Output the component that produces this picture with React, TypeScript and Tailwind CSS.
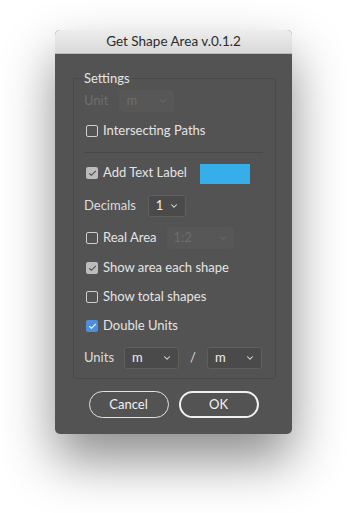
import { Check, ChevronDown } from "lucide-react";

type Tone = "off" | "gray" | "blue";

function Box({ tone }: { tone: Tone }) {
  if (tone === "off") {
    return (
      <span className="w-[12px] h-[12px] rounded-[2px] border border-[#cfcfcf] shrink-0" />
    );
  }
  const bg = tone === "blue" ? "bg-[#4d8fdc]" : "bg-[#bcbcbc]";
  const mark = tone === "blue" ? "text-[#e8f1fb]" : "text-[#5a5a5a]";
  return (
    <span
      className={`w-[12px] h-[12px] rounded-[2px] ${bg} shrink-0 flex items-center justify-center`}
    >
      <Check className={`w-[9px] h-[9px] ${mark}`} strokeWidth={3} />
    </span>
  );
}

function CheckRow({ tone, label }: { tone: Tone; label: string }) {
  return (
    <label className="flex items-center gap-[5px] h-[20px] pl-[2px]">
      <Box tone={tone} />
      <span className="text-[#e4e4e4]">{label}</span>
    </label>
  );
}

function Select({
  value,
  width,
  dim = false,
}: {
  value: string;
  width: string;
  dim?: boolean;
}) {
  return (
    <div
      className={`${width} h-[22px] rounded-[3px] flex items-center justify-between pl-[7px] pr-[6px] ${
        dim
          ? "bg-[#575757] text-[#6d6d6d]"
          : "bg-[#4a4a4a] border border-[#5f5f5f] text-[#ededed]"
      }`}
    >
      <span>{value}</span>
      <ChevronDown
        className={`w-[10px] h-[10px] ${dim ? "text-[#686868]" : "text-[#e6e6e6]"}`}
        strokeWidth={2.5}
      />
    </div>
  );
}

export default function App() {
  return (
    <div
      className="min-h-[513px] bg-white pt-[30px]"
      style={{ fontFamily: "Lato, 'Noto Sans', sans-serif" }}
    >
      <div className="mx-auto w-[237px] rounded-[5px] bg-[#535353] shadow-[0_26px_52px_rgba(0,0,0,0.45)] overflow-hidden">
        {/* Title bar */}
        <div className="h-[24px] bg-gradient-to-b from-[#ededed] to-[#d9d9d9] border-b border-[#b9b9b9] flex items-center justify-center text-[13.5px] text-[#2c2c2c]">
          Get Shape Area v.0.1.2
        </div>

        <div className="pt-[17px] pb-[16px] text-[13px]">
          <fieldset className="ml-[18px] mr-[16px] border border-[#4a4a4a] rounded-[3px] pl-[10px] pr-[12px] pb-[9px]">
            <legend className="leading-[14px] px-[2px] -ml-[2px] text-[#e4e4e4]">
              Settings
            </legend>

            <div className="flex flex-col">
              {/* Unit */}
              <div className="flex items-center gap-[11px] mt-[6px] h-[20px]">
                <span className="text-[#6e6e6e]">Unit</span>
                <Select value="m" width="w-[55px]" dim />
              </div>

              <div className="mt-[10px]">
                <CheckRow tone="off" label="Intersecting Paths" />
              </div>

              <div className="mt-[11px] h-[1px] bg-[#474747]" />

              <div className="mt-[9px] flex items-center h-[22px]">
                <CheckRow tone="gray" label="Add Text Label" />
                <span className="ml-[13px] w-[50px] h-[20px] bg-[#36aeea] mt-[2px]" />
              </div>

              <div className="mt-[11px] flex items-center gap-[12px] h-[22px]">
                <span className="text-[#dcdcdc]">Decimals</span>
                <Select value="1" width="w-[38px]" />
              </div>

              <div className="mt-[10px] flex items-center h-[22px]">
                <CheckRow tone="off" label="Real Area" />
                <div className="ml-[10px]">
                  <Select value="1:2" width="w-[67px]" dim />
                </div>
              </div>

              <div className="mt-[9px]">
                <CheckRow tone="gray" label="Show area each shape" />
              </div>
              <div className="mt-[9px]">
                <CheckRow tone="off" label="Show total shapes" />
              </div>
              <div className="mt-[9px]">
                <CheckRow tone="blue" label="Double Units" />
              </div>

              <div className="mt-[11px] flex items-center h-[22px]">
                <span className="text-[#dcdcdc] w-[40px]">Units</span>
                <Select value="m" width="w-[55px]" />
                <span className="text-[#dcdcdc] w-[28px] text-center">/</span>
                <Select value="m" width="w-[55px]" />
              </div>
            </div>
          </fieldset>

          <div className="mt-[12px] flex justify-center gap-[10px]">
            <button className="w-[80px] h-[27px] rounded-full border border-[#e2e2e2] text-[#f2f2f2] text-[13px]">
              Cancel
            </button>
            <button className="w-[80px] h-[27px] rounded-full border-2 border-[#f0f0f0] text-[#f2f2f2] text-[13px]">
              OK
            </button>
          </div>
        </div>
      </div>
    </div>
  );
}
